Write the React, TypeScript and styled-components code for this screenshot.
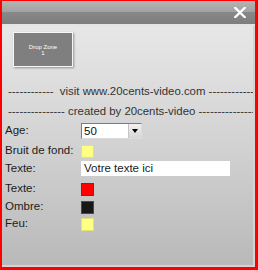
import React from "react";
import styled, { createGlobalStyle } from "styled-components";

const Global = createGlobalStyle`
  html, body { margin: 0; padding: 0; background: #ffffff; }
  body { font-family: "Liberation Sans", Arial, sans-serif; }
`;

const Frame = styled.div`
  width: 258px;
  height: 270px;
  box-sizing: border-box;
  border-style: solid;
  border-color: #ff0000;
  border-width: 1px 3px 3px 2px;
  display: flex;
  flex-direction: column;
  overflow: hidden;
`;

const TitleBar = styled.div`
  height: 23px;
  flex: none;
  background: linear-gradient(
    to bottom,
    #b4b4b4 0%,
    #a2a2a2 46%,
    #888888 50%,
    #7d7d7d 100%
  );
  border-bottom: 2px solid #e4e4e4;
  display: flex;
  align-items: center;
  justify-content: flex-end;
  padding-right: 9px;
`;

const CloseIcon = styled.svg`
  width: 12px;
  height: 11px;
  display: block;
`;

const Body = styled.div`
  flex: 1;
  min-height: 0;
  box-sizing: border-box;
  background: linear-gradient(to bottom, #e7e7e7 0%, #d2d2d2 50%, #b9b9b9 100%);
  border-right: 2px solid #d4d4d4;
  border-bottom: 2px solid #d4d4d4;
  display: flex;
  flex-direction: column;
  overflow: hidden;
`;

const DropZone = styled.div`
  margin: 6px 0 0 11px;
  width: 60px;
  height: 35px;
  box-sizing: border-box;
  border: 1px solid #f6f6f6;
  background: #7f7f7f;
  box-shadow: 1px 1px 2px rgba(0, 0, 0, 0.35);
  color: #ffffff;
  font-size: 6px;
  line-height: 6px;
  display: flex;
  flex-direction: column;
  align-items: center;
  justify-content: center;
  text-align: center;
`;

const InfoLines = styled.div`
  margin-top: 14px;
  padding-left: 6px;
  font-size: 11.4px;
  line-height: 20px;
  color: #333333;
  white-space: nowrap;
  overflow: hidden;
`;

const Form = styled.div`
  padding-left: 3px;
  display: flex;
  flex-direction: column;
  font-size: 11.5px;
  color: #1c1c1c;
`;

const Row = styled.div<{ $h: number; $mt?: number }>`
  height: ${(p) => p.$h}px;
  margin-top: ${(p) => p.$mt ?? 0}px;
  display: flex;
  align-items: center;
`;

const Label = styled.span`
  width: 76px;
  flex: none;
  margin-top: -2px;
  white-space: nowrap;
`;

const SelectBox = styled.div`
  width: 61px;
  height: 16px;
  box-sizing: border-box;
  background: #ffffff;
  border: 1px solid;
  border-color: #7c7c7c #dcdcdc #dcdcdc #7c7c7c;
  display: flex;
  align-items: center;
`;

const SelectValue = styled.span`
  flex: 1;
  padding-left: 2px;
  font-size: 11.5px;
  color: #111111;
`;

const SelectButton = styled.span`
  width: 13px;
  height: 14px;
  flex: none;
  box-sizing: border-box;
  display: flex;
  align-items: center;
  justify-content: center;
  background: linear-gradient(to bottom, #f2f2f2, #d6d6d6);
  border-left: 1px solid #c4c4c4;
`;

const Arrow = styled.span`
  width: 0;
  height: 0;
  border-left: 3.5px solid transparent;
  border-right: 3.5px solid transparent;
  border-top: 4px solid #000000;
`;

const Swatch = styled.span<{ $c: string; $b: string }>`
  width: 13px;
  height: 13px;
  box-sizing: border-box;
  background: ${(p) => p.$c};
  border: 1px solid ${(p) => p.$b};
`;

const TextInput = styled.div`
  width: 149px;
  height: 15px;
  box-sizing: border-box;
  background: #ffffff;
  padding-left: 3px;
  font-size: 11.5px;
  line-height: 15px;
  color: #1a1a1a;
  white-space: nowrap;
`;

export default function App() {
  return (
    <>
      <Global />
      <Frame>
        <TitleBar>
          <CloseIcon viewBox="0 0 12 11">
            <path
              d="M1.2 0.8 L10.8 10.2 M10.8 0.8 L1.2 10.2"
              stroke="#ffffff"
              strokeWidth="2.3"
              strokeLinecap="square"
            />
          </CloseIcon>
        </TitleBar>
        <Body>
          <DropZone>
            <span>Drop Zone</span>
            <span>1</span>
          </DropZone>
          <InfoLines>
            <div>------------ &nbsp;visit www.20cents-video.com ------------------------</div>
            <div>--------------- created by 20cents-video ------------------------</div>
          </InfoLines>
          <Form>
            <Row $h={20}>
              <Label>Age:</Label>
              <SelectBox>
                <SelectValue>50</SelectValue>
                <SelectButton>
                  <Arrow />
                </SelectButton>
              </SelectBox>
            </Row>
            <Row $h={20}>
              <Label>Bruit de fond:</Label>
              <Swatch $c="#ffff80" $b="#e2e27a" />
            </Row>
            <Row $h={15}>
              <Label>Texte:</Label>
              <TextInput>Votre texte ici</TextInput>
            </Row>
            <Row $h={16} $mt={5}>
              <Label>Texte:</Label>
              <Swatch $c="#ff0000" $b="#d80000" />
            </Row>
            <Row $h={20}>
              <Label>Ombre:</Label>
              <Swatch $c="#181818" $b="#4a4a4a" />
            </Row>
            <Row $h={14}>
              <Label>Feu:</Label>
              <Swatch $c="#ffff80" $b="#e2e27a" />
            </Row>
          </Form>
        </Body>
      </Frame>
    </>
  );
}
